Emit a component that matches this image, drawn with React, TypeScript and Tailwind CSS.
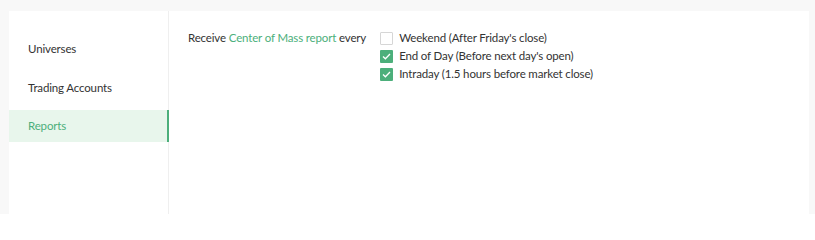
import React, { useState } from 'react';

const navItems = ['Universes', 'Trading Accounts', 'Reports'];

const options = [
  { id: 'weekend', label: "Weekend (After Friday's close)", checked: false },
  { id: 'eod', label: "End of Day (Before next day's open)", checked: true },
  { id: 'intraday', label: 'Intraday (1.5 hours before market close)', checked: true },
];

function Checkbox({ checked, onChange }: { checked: boolean; onChange: () => void }) {
  return (
    <button
      onClick={onChange}
      className={`w-[13px] h-[13px] shrink-0 flex items-center justify-center rounded-[1px] ${
        checked ? 'bg-[#4caf7b]' : 'bg-white border border-[#d6d6d6]'
      }`}
    >
      {checked && (
        <svg width="9" height="7" viewBox="0 0 9 7" fill="none">
          <path d="M1 3.5L3.4 5.8L8 1" stroke="white" strokeWidth="1.3" />
        </svg>
      )}
    </button>
  );
}

export default function App() {
  const [active, setActive] = useState('Reports');
  const [checks, setChecks] = useState<Record<string, boolean>>(
    Object.fromEntries(options.map(o => [o.id, o.checked]))
  );

  return (
    <div
      className="h-[214px] overflow-hidden bg-[#f8f8f8] pt-[11px] pl-[9px] pr-[6px] text-[11.5px] tracking-[-0.15px] text-[#333]"
      style={{ fontFamily: 'Lato, "Open Sans", sans-serif' }}
    >
      <div className="flex h-full bg-white">
        {/* Sidebar */}
        <nav className="w-[160px] border-r border-[#efefef] pt-[22px] flex flex-col gap-[6.5px]">
          {navItems.map(item => (
            <button
              key={item}
              onClick={() => setActive(item)}
              className={`h-8 pl-[19px] text-left mr-[-1px] ${
                active === item
                  ? 'bg-[#e8f6ec] text-[#4caf7b] border-r-2 border-[#4caf7b]'
                  : 'text-[#333]'
              }`}
            >
              {item}
            </button>
          ))}
        </nav>

        {/* Content */}
        <div className="flex-1 pl-[19px] pt-[18px]">
          <div className="flex items-start">
            <div className="leading-[18px]">
              Receive <span className="text-[#4caf7b]">Center of Mass report</span> every
            </div>
            <div className="ml-[14px] flex flex-col">
              {options.map(o => (
                <label key={o.id} className="flex items-center gap-[6px] h-[18px] leading-[18px]">
                  <Checkbox
                    checked={checks[o.id]}
                    onChange={() => setChecks({ ...checks, [o.id]: !checks[o.id] })}
                  />
                  <span>{o.label}</span>
                </label>
              ))}
            </div>
          </div>
        </div>
      </div>
    </div>
  );
}
